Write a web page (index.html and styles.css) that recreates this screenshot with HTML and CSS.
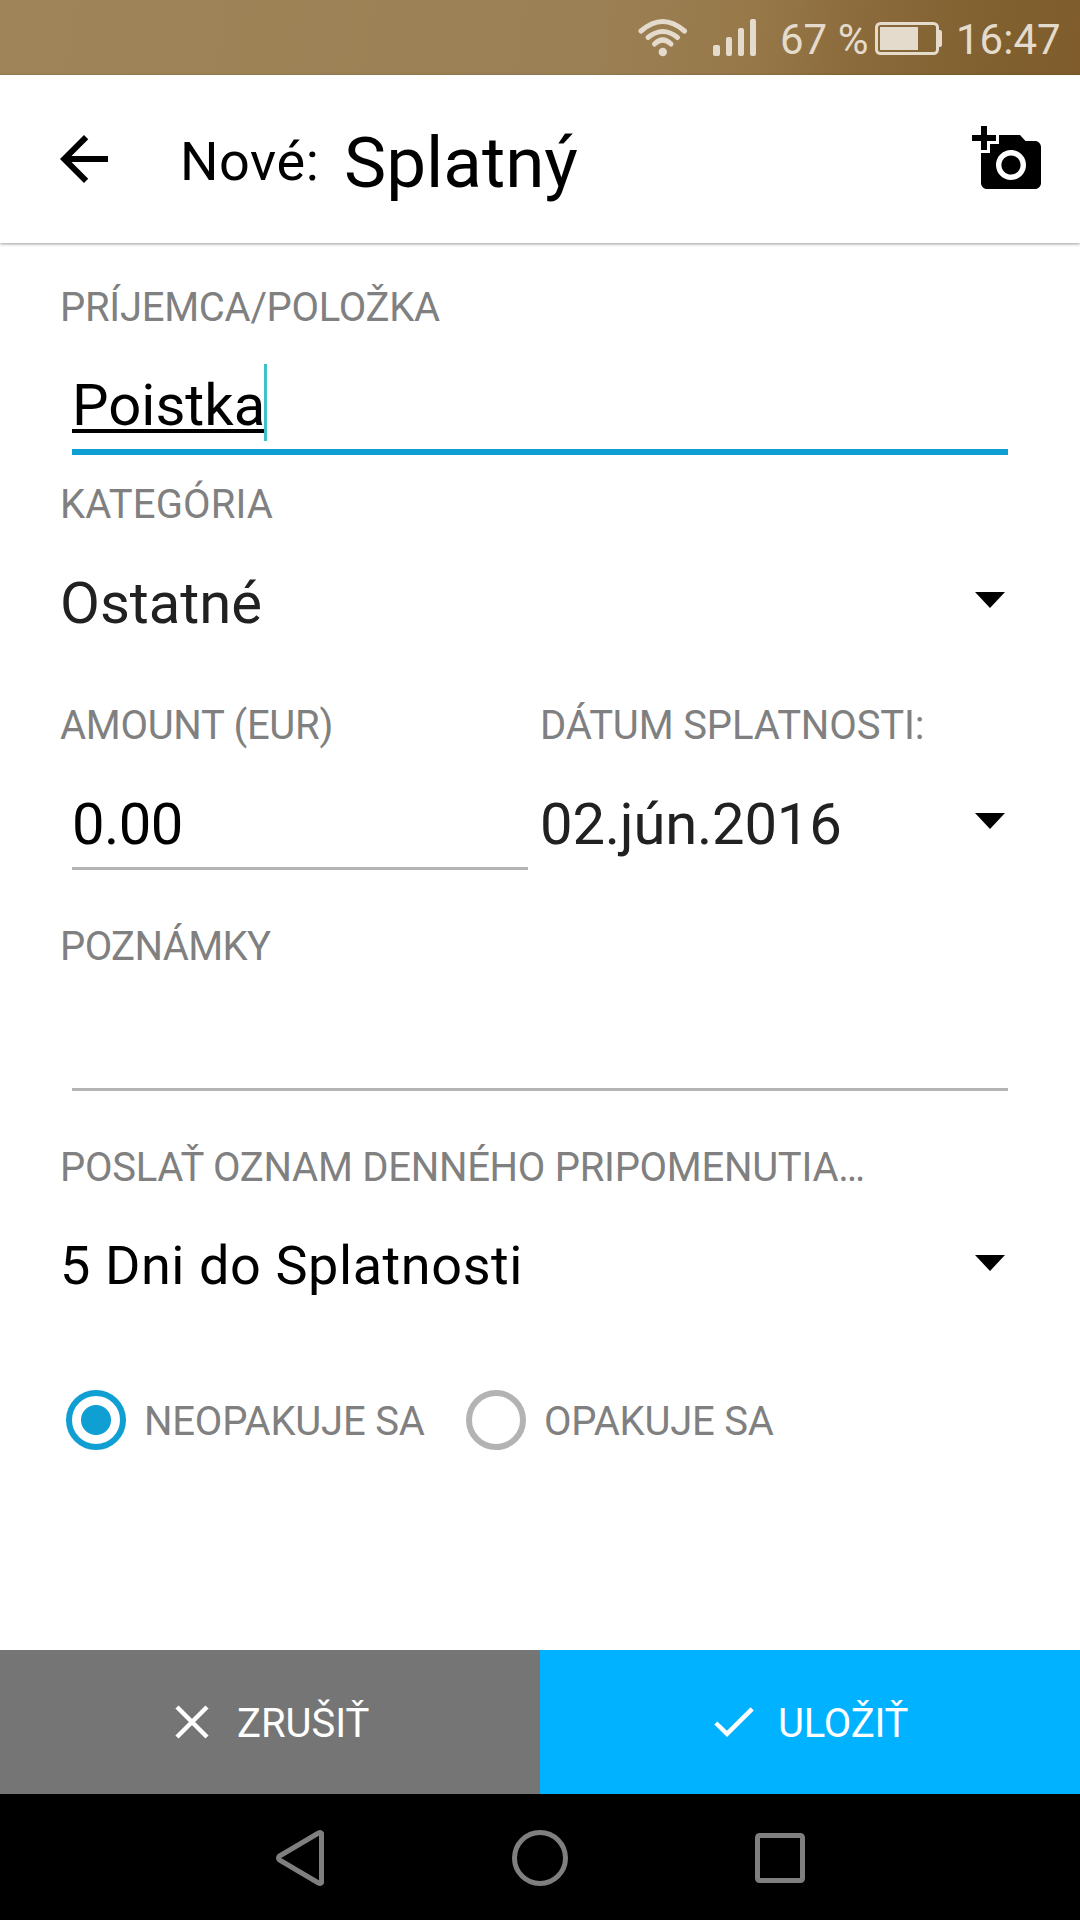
FILE: index.html
```html
<!DOCTYPE html>
<html lang="sk">
<head>
<meta charset="utf-8">
<title>Nové: Splatný</title>
<link rel="stylesheet" href="styles.css">
</head>
<body>
<div class="screen">
  <div class="status">
    <svg class="wifi" width="52" height="40" viewBox="0 0 52 40"><g fill="none" stroke="currentColor" stroke-width="5" stroke-linecap="round"><path d="M4 14Q25.7-5 47.5 14"/><path d="M11 20.5Q25.7 8.500 40.500 20.500"/><path d="M17.500 27Q25.700 19 34 27"/></g><circle cx="25.800" cy="35" r="4.200" fill="currentColor"/></svg>
    <svg class="signal" width="44" height="38" viewBox="0 0 44 38" fill="currentColor"><rect x="0" y="26" width="7" height="11" rx="2"/><rect x="13" y="18" width="6" height="19" rx="2"/><rect x="25" y="9" width="6" height="28" rx="2"/><rect x="37" y="0" width="6" height="37" rx="2"/></svg>
    <span class="percent">67 %</span>
    <svg class="battery" width="68" height="34" viewBox="0 0 68 34"><rect x="1.500" y="1.500" width="61" height="30" rx="4" fill="none" stroke="currentColor" stroke-width="3"/><path fill="currentColor" d="M5 5h38v23H5zM64 8h1q2 0 2 2v2v10v1q0 2-2 2h-1z"/></svg>
    <span class="clock">16:47</span>
  </div>
  <header class="appbar">
    <svg class="back" width="72" height="72" viewBox="0 0 24 24"><path d="M20 11H7.830l5.590-5.590L12 4l-8 8 8 8 1.410-1.410L7.830 13H20v-2z"/></svg>
    <span class="prefix">Nové:</span>
    <h1 class="title">Splatný</h1>
    <svg class="camera" width="72" height="72" viewBox="0 0 24 24"><path d="M3 4V1h2v3h3v2H5v3H3V6H0V4h3zm3 6V7h3V4h7l1.830 2H21c1.100 0 2 .9 2 2v12c0 1.100-.9 2-2 2H5c-1.100 0-2-.9-2-2V10h3zm7 9c2.760 0 5-2.240 5-5s-2.240-5-5-5-5 2.240-5 5 2.240 5 5 5zm-3.200-5c0 1.770 1.430 3.200 3.200 3.200s3.200-1.430 3.200-3.200-1.430-3.200-3.200-3.200-3.200 1.430-3.200 3.200z"/></svg>
  </header>
  <main class="form">
    <section class="field payee">
      <div class="label"><span>PRÍJEMCA/POLOŽKA</span></div>
      <div class="input focused"><span class="typed">Poistka</span><i class="caret"></i></div>
    </section>
    <section class="field category">
      <div class="label"><span>KATEGÓRIA</span></div>
      <div class="select"><span class="muted">Ostatné</span><svg class="arrow" width="30" height="16" viewBox="0 0 30 16"><path d="M0 0h30L15 16z"/></svg></div>
    </section>
    <div class="columns">
      <section class="field amount">
        <div class="label"><span>AMOUNT (EUR)</span></div>
        <div class="input"><span>0.00</span></div>
      </section>
      <section class="field due">
        <div class="label"><span>DÁTUM SPLATNOSTI:</span></div>
        <div class="select"><span class="muted">02.jún.2016</span><svg class="arrow" width="30" height="16" viewBox="0 0 30 16"><path d="M0 0h30L15 16z"/></svg></div>
      </section>
    </div>
    <section class="field notes">
      <div class="label"><span>POZNÁMKY</span></div>
      <div class="input"></div>
    </section>
    <section class="field">
      <div class="label"><span>POSLAŤ OZNAM DENNÉHO PRIPOMENUTIA…</span></div>
      <div class="select reminder"><span>5 Dni do Splatnosti</span><svg class="arrow" width="30" height="16" viewBox="0 0 30 16"><path d="M0 0h30L15 16z"/></svg></div>
    </section>
    <div class="radios">
      <div class="option"><i class="radio checked"></i><span>NEOPAKUJE SA</span></div>
      <div class="option"><i class="radio"></i><span>OPAKUJE SA</span></div>
    </div>
  </main>
  <div class="actions">
    <div class="button cancel">
      <svg width="34" height="34" viewBox="0 0 34 34"><path d="M2 2l30 30M32 2L2 32"/></svg>
      <span>ZRUŠIŤ</span>
    </div>
    <div class="button save">
      <svg width="40" height="30" viewBox="0 0 40 30"><path d="M1.800 16L13 26.800 38.200 1.800"/></svg>
      <span>ULOŽIŤ</span>
    </div>
  </div>
  <nav class="navbar">
    <svg width="540" height="60" viewBox="0 0 540 60"><path d="M51.500 5.500v49q-1 1.500-3 .5L9.500 32Q7.500 30 9.500 28L48.500 5q2-1 3 .5z"/><circle cx="270" cy="30" r="25.500"/><rect x="487.500" y="7.500" width="45" height="45" rx="2"/></svg>
  </nav>
</div>
</body>
</html>
```
FILE: styles.css
```css
* { box-sizing: border-box; }
body { margin: 0; background: #fff; font-family: Roboto, "Noto Sans", sans-serif; color: #000; }
.screen { width: 1080px; height: 1920px; display: flex; flex-direction: column; overflow: hidden; white-space: nowrap; }
svg { display: block; flex: none; }

.status { height: 75px; flex: none; display: flex; align-items: flex-start; padding: 0 18px 0 637px; color: #e4dbcd; background: linear-gradient(100deg, #9e8458 0%, #9c8055 55%, #967848 70%, #8a693a 80%, #80602f 92%, #805c2c 100%); font-size: 42px; line-height: 50px; }
.wifi { margin-top: 17px; }
.signal { margin: 19px 0 0 24px; }
.percent { margin: 15px 0 0 23px; width: 95px; }
.battery { margin-top: 22px; }
.clock { margin: 15px 0 0 13px; }

.appbar { height: 168px; flex: none; display: flex; align-items: flex-start; padding: 0 36px 0 48px; box-shadow: 0 1px 3px rgba(0, 0, 0, .4); }
.back { margin-top: 48px; }
.prefix { margin: 57px 0 0 60px; width: 164px; font-size: 54px; line-height: 60px; letter-spacing: .6px; }
.title { margin: 48px 0 0; font-size: 71px; line-height: 80px; font-weight: 400; }
.camera { margin: 48px 0 0 auto; }

.form { flex: 1; padding: 39px 60px 0; }
.field { height: 221px; }
.payee { height: 197px; }
.label { height: 50px; font-size: 40px; line-height: 52px; letter-spacing: -.28px; color: #808080; }
.category .label { letter-spacing: .1px; }
.due .label { letter-spacing: -.14px; }
.notes .label { letter-spacing: -.6px; }
.input { height: 120px; margin: 0 0 0 12px; padding-top: 34px; border-bottom: 3px solid #b3b3b3; font-size: 58px; line-height: 80px; }
.field > .input { margin-right: 12px; }
.amount .input { letter-spacing: -.6px; }
.due .select { letter-spacing: -.22px; }
.focused { display: flex; height: 123px; padding-top: 32px; border-bottom: 6px solid #0f9fd2; line-height: 82px; }
.typed { margin-right: -1px; text-decoration: underline; text-decoration-thickness: 4px; text-underline-offset: 4px; }
.caret { width: 3px; height: 77px; background: #3fc1c9; }
.select { display: flex; align-items: center; justify-content: space-between; height: 80px; margin-top: 34px; padding-right: 15px; font-size: 58px; line-height: 80px; }
.muted { color: #212121; }
.reminder { font-size: 54px; letter-spacing: .58px; }
.arrow { margin-bottom: 6px; }
.columns { display: grid; grid-template-columns: 480px 480px; }

.radios { display: flex; margin-top: 27px; padding-left: 6px; color: #808080; font-size: 40px; line-height: 64px; letter-spacing: -.2px; }
.option { display: flex; width: 400px; height: 60px; gap: 18px; }
.radio { width: 60px; height: 60px; border: 6px solid #b3b3b3; border-radius: 50%; }
.checked { border-color: #0f9fd2; background: radial-gradient(circle, #0f9fd2 14.500px, transparent 15.500px); }

.actions { display: grid; grid-template-columns: 1fr 1fr; flex: none; height: 144px; color: #fff; font-size: 40px; line-height: 50px; }
.button { display: flex; align-items: center; }
.button path { fill: none; stroke: #fff; stroke-width: 4.500px; }
.button span { margin-top: 4px; }
.cancel { background: #757575; padding-left: 175px; gap: 28px; }
.save { background: #00b2ff; padding-left: 174px; gap: 24px; letter-spacing: -.2px; }

.navbar { height: 126px; flex: none; background: #000; display: flex; justify-content: center; padding-top: 34px; }
.navbar svg { fill: none; stroke: #7f7f7f; stroke-width: 5px; }
```
